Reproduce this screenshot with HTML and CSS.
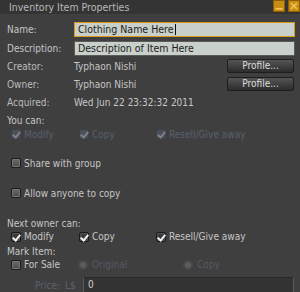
FILE: index.html
```html
<!DOCTYPE html>
<html>
<head>
<meta charset="utf-8">
<link rel="stylesheet" href="styles.css">
</head>
<body>
<div class="floater">
  <div class="titlebar">
    <span class="title">Inventory Item Properties</span>
    <div class="tbtns">
      <span class="tbtn"><svg width="12" height="12" viewBox="0 0 12 12"><rect x="2.5" y="8" width="7" height="1.6" fill="#f3c25a"/></svg></span>
      <span class="tbtn"><svg width="12" height="12" viewBox="0 0 12 12"><path d="M3 3 L9 9 M9 3 L3 9" stroke="#f3c25a" stroke-width="1.6"/></svg></span>
    </div>
  </div>

  <div class="row r-name">
    <span class="lbl">Name:</span>
    <div class="field focus">Clothing Name Here<span class="caret"></span></div>
  </div>
  <div class="row r-desc">
    <span class="lbl">Description:</span>
    <div class="field">Description of Item Here</div>
  </div>
  <div class="row r-info r-creator">
    <span class="lbl">Creator:</span>
    <span class="val">Typhaon Nishi</span>
    <span class="btn">Profile...</span>
  </div>
  <div class="row r-info">
    <span class="lbl">Owner:</span>
    <span class="val">Typhaon Nishi</span>
    <span class="btn">Profile...</span>
  </div>
  <div class="row r-info">
    <span class="lbl">Acquired:</span>
    <span class="val">Wed Jun 22 23:32:32 2011</span>
  </div>

  <div class="row r-head r-youcan"><span class="hlbl">You can:</span></div>
  <div class="row r-checks">
    <span class="chk c1 disabled checked"><i class="box"></i>Modify</span>
    <span class="chk c2 disabled checked"><i class="box"></i>Copy</span>
    <span class="chk c3 disabled checked"><i class="box"></i>Resell/Give away</span>
  </div>
  <div class="row r-share">
    <span class="chk c1"><i class="box"></i>Share with group</span>
  </div>
  <div class="row r-allow">
    <span class="chk c1"><i class="box"></i>Allow anyone to copy</span>
  </div>

  <div class="row r-head r-next"><span class="hlbl">Next owner can:</span></div>
  <div class="row r-checks2">
    <span class="chk c1 checked"><i class="box"></i>Modify</span>
    <span class="chk c2 checked"><i class="box"></i>Copy</span>
    <span class="chk c3 checked"><i class="box"></i>Resell/Give away</span>
  </div>
  <div class="row r-head r-mark"><span class="hlbl">Mark Item:</span></div>
  <div class="row r-sale">
    <span class="chk c1"><i class="box"></i>For Sale</span>
    <span class="radio r1 disabled"><i class="dot"></i>Original</span>
    <span class="radio r2 disabled"><i class="dot"></i>Copy</span>
  </div>
  <div class="row r-price">
    <span class="plabel">Price:</span>
    <span class="plabel ls">L$</span>
    <div class="pfield">0</div>
  </div>
</div>
</body>
</html>
```

FILE: styles.css
```css
html, body {
  margin: 0;
  padding: 0;
  background: #3e3e3e;
}
body {
  width: 300px;
  height: 292px;
  overflow: hidden;
  font-family: "DejaVu Sans Condensed", "DejaVu Sans", sans-serif;
  font-stretch: condensed;
  font-size: 10px;
  color: #c6c6c6;
}
.floater {
  width: 300px;
  height: 292px;
  background: #3f3f3f;
}
.titlebar {
  height: 14px;
  background: #343434;
  display: flex;
  align-items: center;
  justify-content: space-between;
}
.title {
  padding-left: 9px;
  font-size: 10.5px;
  color: #b8b8b8;
}
.tbtns {
  display: flex;
  gap: 3px;
  align-self: flex-start;
}
.tbtn {
  width: 12px;
  height: 12px;
  box-sizing: border-box;
  background: #c98d12;
  border: 1px solid #8d5e06;
  display: flex;
  align-items: center;
  justify-content: center;
}
.tbtn svg { display: block; margin: -1px; }

.row {
  display: flex;
  align-items: center;
  position: relative;
}
.lbl {
  width: 67px;
  padding-left: 7px;
  flex: none;
}
.hlbl {
  padding-left: 7px;
  white-space: nowrap;
}
.r-name { margin-top: 8px; height: 15px; }
.r-desc { margin-top: 4px; height: 15px; }
.field {
  width: 221px;
  height: 15px;
  box-sizing: border-box;
  background: #c8d0c9;
  border: 1px solid #5a5a5a;
  color: #1c1c1c;
  padding-left: 3px;
  line-height: 13px;
  font-size: 10.5px;
  display: flex;
  align-items: center;
}
.field.focus {
  border-color: #d99a1a;
}
.caret {
  display: inline-block;
  width: 1px;
  height: 11px;
  background: #111;
  margin-left: 1px;
}
.r-info { height: 18px; }
.r-creator { margin-top: 1px; }
.val { flex: 1; }
.btn {
  width: 67px;
  height: 14px;
  box-sizing: border-box;
  margin-right: 6px;
  border: 1px solid #1e1e1e;
  border-radius: 2px;
  background: linear-gradient(#555555, #2c2c2c);
  color: #dcdcdc;
  text-align: center;
  line-height: 12px;
}
.r-info .lbl { color: #bdbdbd; }

.r-head { height: 14px; }
.r-youcan { margin-top: 2px; }
.r-checks { height: 14px; }
.r-share { height: 14px; margin-top: 15px; }
.r-allow { height: 14px; margin-top: 16px; }
.r-next { margin-top: 17px; height: 13px; }
.r-checks2 { height: 13px; }
.r-mark { height: 14px; margin-top: 1px; }
.r-sale { height: 13px; }
.r-price { height: 16px; margin-top: 6px; }

.chk, .radio {
  position: absolute;
  top: 0;
  height: 100%;
  display: flex;
  align-items: center;
  white-space: nowrap;
}
.c1 { left: 11px; }
.c2 { left: 79px; }
.c3 { left: 156px; }
.r1 { left: 78px; }
.r2 { left: 183px; }

.box {
  width: 10px;
  height: 10px;
  box-sizing: border-box;
  margin-right: 3px;
  border: 1px solid #1a1a1a;
  border-radius: 2px;
  background: linear-gradient(#6a6a6a, #4a4a4a);
  box-shadow: inset 0 0 0 1px #777;
  position: relative;
  flex: none;
}
.checked .box {
  background: #3a3a3a;
  box-shadow: inset 0 0 0 1px #555;
}
.checked .box::after {
  content: "";
  position: absolute;
  left: 2px;
  top: 0px;
  width: 3px;
  height: 6px;
  border-right: 2px solid #f2f2f2;
  border-bottom: 2px solid #f2f2f2;
  transform: rotate(40deg);
}
.disabled { color: #596070; }
.disabled .box {
  background: #4b4f58;
  border-color: #3d4048;
  box-shadow: none;
}
.disabled.checked .box::after {
  border-color: #7a808e;
}
.dot {
  width: 10px;
  height: 10px;
  border-radius: 50%;
  margin-right: 4px;
  background: radial-gradient(circle, #5c5c5c 0 35%, #4a4a4a 45%, #454545 100%);
  flex: none;
}
.radio.disabled { color: #555a64; }

.plabel {
  position: absolute;
  left: 35px;
  color: #5a6070;
}
.plabel.ls { left: 65px; }
.pfield {
  margin-left: 83px;
  width: 211px;
  height: 16px;
  box-sizing: border-box;
  border: 1px solid #5a5a5a;
  border-top-color: #2a2a2a;
  background: #333333;
  color: #d0d0d0;
  padding-left: 4px;
  line-height: 14px;
}
```
